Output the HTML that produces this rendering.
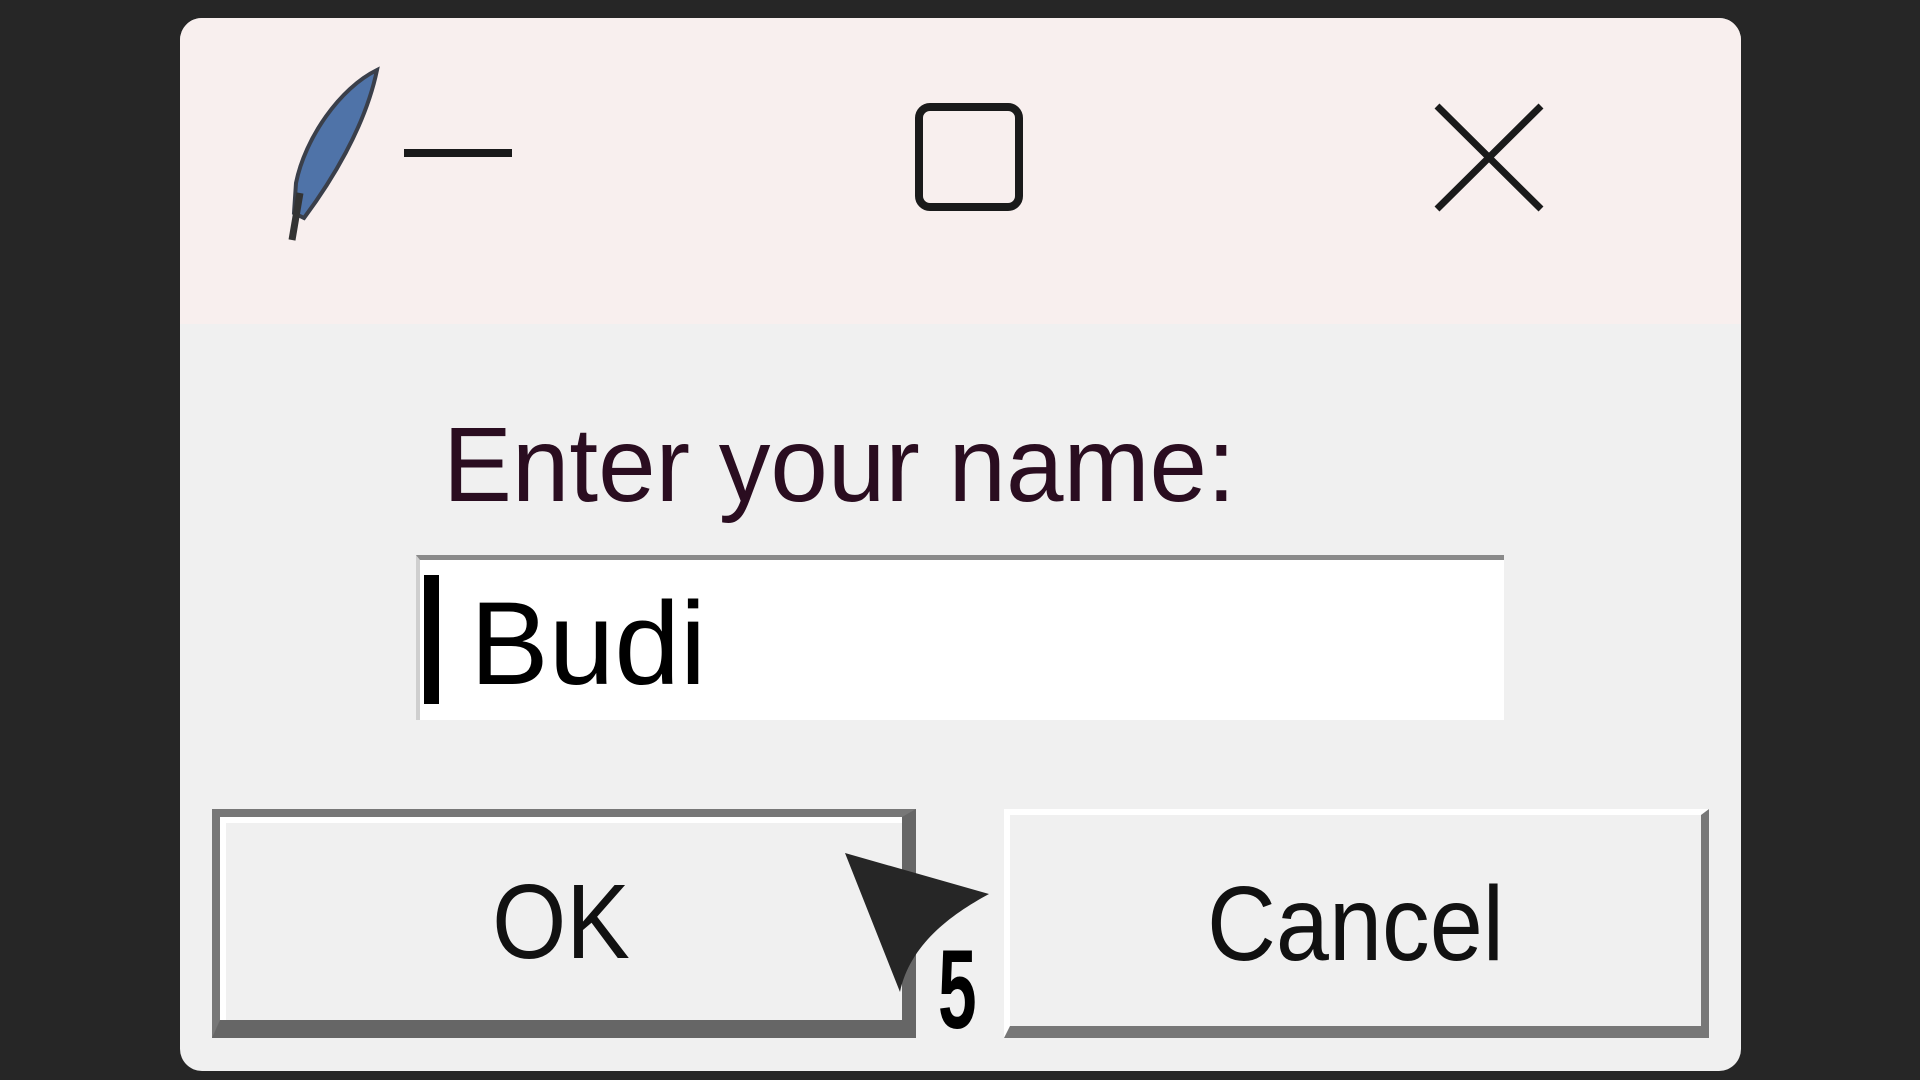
<!DOCTYPE html>
<html><head><meta charset="utf-8"><style>
html,body{margin:0;padding:0;width:1920px;height:1080px;overflow:hidden;background:#262626;font-family:"Liberation Sans",sans-serif}
.win{position:absolute;left:180px;top:18px;width:1561px;height:1053px;background:#f0f0f0;border-radius:22px;overflow:hidden}
.title{position:absolute;left:0;top:0;width:100%;height:306px;background:#f8efee}
.abs{position:absolute}
.lbl{position:absolute;font-size:106px;color:#2a0d20;white-space:nowrap;transform-origin:left top;transform:scaleX(0.975);line-height:1}
.entry{position:absolute;width:1088px;height:165px;background:#fff;border-top:5px solid #8a8a8a;border-left:4px solid #cfcfcf;box-sizing:border-box}
.btn{position:absolute;height:229px;box-sizing:border-box;background:#f0f0f0;font-size:106px;color:#111;text-align:center;line-height:1}
</style></head><body>
<div class="win">
 <div class="title"></div>
 <svg class="abs" style="left:0;top:0" width="1561" height="320">
  <path d="M197 52 C160 70 125 120 116 165 L114 195 L124 200 C150 165 185 110 197 52 Z" fill="#4f73a8" stroke="#3a3f4a" stroke-width="4"/>
  <path d="M120 175 L112 222" stroke="#333" stroke-width="7"/>
  <rect x="224" y="131" width="108" height="8" fill="#1a1a1a"/>
  <rect x="739" y="89" width="100" height="100" rx="11" fill="none" stroke="#1a1a1a" stroke-width="8"/>
  <path d="M1257 88 L1361 191 M1361 88 L1257 191" stroke="#1a1a1a" stroke-width="7"/>
 </svg>
 <div class="lbl" style="left:263px;top:394px">Enter your name:</div>
 <div class="entry" style="left:236px;top:537px"></div>
 <div class="abs" style="left:244px;top:557px;width:15px;height:129px;background:#000"></div>
 <div class="abs" style="left:290px;top:567px;font-size:118px;line-height:1;color:#000">Budi</div>
 <div class="btn" style="left:32px;top:791px;width:704px;border-top:8px solid #777;border-left:8px solid #777;border-right:14px solid #666;border-bottom:18px solid #666;box-shadow:inset 6px 6px 0 #fff"><div style="padding-top:52px;transform:scaleX(0.9)">OK</div></div>
 <div class="btn" style="left:824px;top:791px;width:705px;border-top:6px solid #fff;border-left:6px solid #fff;border-right:8px solid #777;border-bottom:12px solid #777"><div style="padding-top:56px;transform:scaleX(0.9)">Cancel</div></div>
</div>
<svg class="abs" style="left:0;top:0" width="1920" height="1080">
 <path d="M845 853 L989 894 C950 915 910 945 900 992 Z" fill="#262626"/>
</svg>
<div class="abs" style="left:938px;top:934px;font-size:112px;font-weight:bold;line-height:1;color:#000;transform-origin:left top;transform:scaleX(0.62)">5</div>
</body></html>
